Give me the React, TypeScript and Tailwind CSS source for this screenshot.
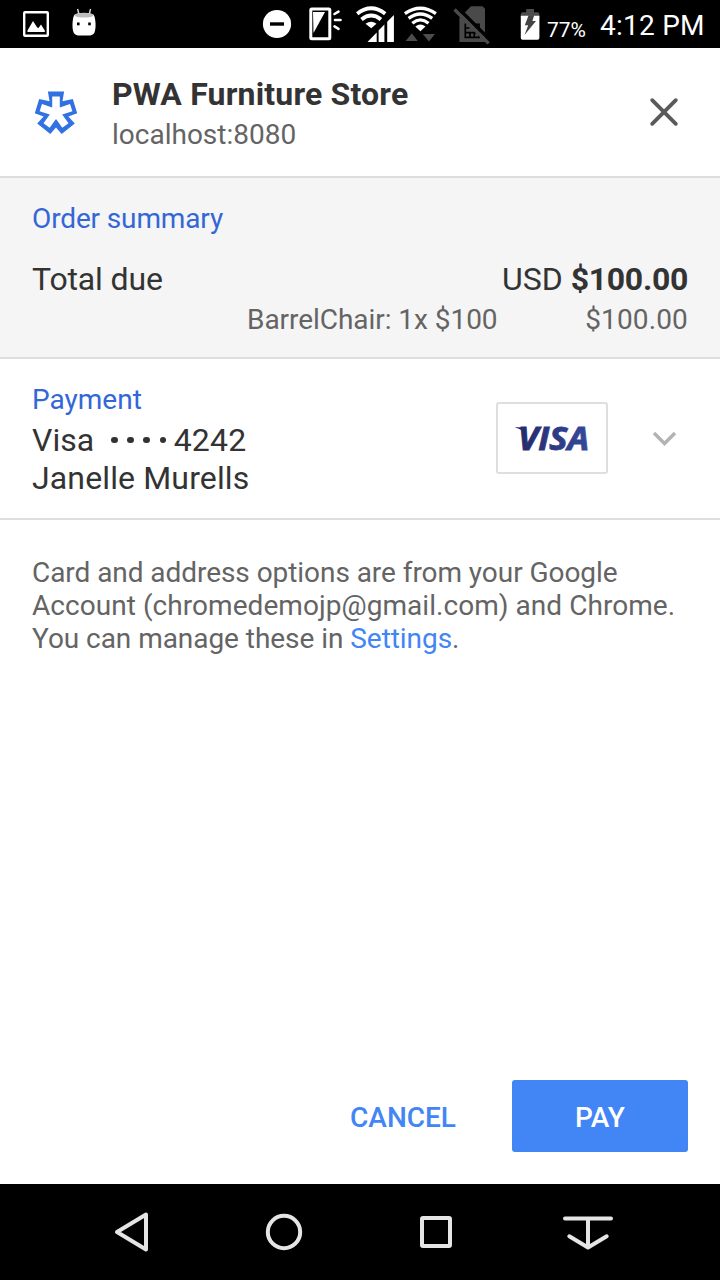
import React from "react";

const STAR =
  "M47.9 91.6H64.1L62.5 101.2L72.8 98.9L77.2 113.3L68.4 116.4L74.8 123.4L61.7 133.9L56 127.4L50.3 133.9L37.2 123.4L43.6 116.4L34.8 113.3L39.2 98.9L49.5 101.2Z" +
  "M52.2 96.6V107.4L42 104.1L39.6 111.3L49.8 114.6L43.5 123.3L49.7 127.8L56 119.1L62.3 127.8L68.5 123.3L62.2 114.6L72.4 111.3L70 104.1L59.8 107.4V96.6Z";

function StatusBar() {
  return (
    <header className="flex h-12 shrink-0 items-center bg-black text-white">
      <svg className="ml-5 h-12 w-20" viewBox="20 0 80 48">
        <rect x="24.2" y="12.2" width="23.6" height="23.6" rx="0.8" fill="none" stroke="#fff" strokeWidth="2.4" />
        <path d="M27.5 32V30.5L33 21L37.2 27.5L38.5 28L41 24.6L44.8 30.5V32Z" fill="#fff" />
        <path d="M79.2 15L77.6 9M89 15L90.6 9" stroke="#ddd" strokeWidth="1.4" />
        <path d="M74.3 15C76 12.3 92 12.3 93.8 15C95.6 18 96.4 28 94.5 32.5C93 35.8 89 35.6 84 35.6C79 35.6 75.2 35.8 73.6 32.5C71.8 28 72.4 18 74.3 15Z" fill="#fff" />
        <ellipse cx="84" cy="15.2" rx="9.3" ry="2.4" fill="#bdbdbd" />
        <rect x="77" y="22.5" width="2.6" height="2.8" fill="#000" />
        <rect x="88.2" y="22.5" width="2.6" height="2.8" fill="#000" />
      </svg>
      <svg className="ml-40 h-12 w-[284px]" viewBox="260 0 284 48">
        <circle cx="277" cy="24" r="14.1" fill="#fff" />
        <rect x="270" y="22.3" width="14" height="3.4" fill="#000" />
        <rect x="310.8" y="9" width="19" height="29.8" rx="1" fill="none" stroke="#fff" strokeWidth="3" />
        <path d="M313 12H325L313.5 33Z" fill="#fff" />
        <path d="M334.5 14L338.5 11.6M335 20H340.5M334.5 26.4L338.5 28.8" stroke="#fff" strokeWidth="2.6" strokeLinecap="round" />
        <g fill="none" stroke="#fff" strokeWidth="3.9">
          <path d="M357.2 13.7Q371.2 3 385.2 13.7" />
          <path d="M361.5 19.4Q371.2 11.6 380.9 19.4" />
          <path d="M404.9 13.7Q420.4 3 435.9 13.7" strokeWidth="3.4" />
          <path d="M408.6 18.4Q420.4 9.5 432.2 18.4" strokeWidth="3.3" />
          <path d="M412.3 23.2Q420.4 16.6 428.5 23.2" strokeWidth="3.3" />
        </g>
        <path d="M365.5 23.8Q371.2 19.8 376.5 23.8L371.2 28.2Z" fill="#fff" />
        <path d="M415.3 26.5Q420.4 22.7 425.5 26.5L420.4 31.3Z" fill="#fff" />
        <path d="M367.5 42L376.7 32.4V42ZM378.5 30.5L380 29V42H378.5ZM380 29L384.4 24.5V42H380ZM387.2 21.7L393.9 15V42H387.2Z" fill="#fff" />
        <path d="M377.6 31V42M385.8 23V42" stroke="#000" strokeWidth="1.2" />
        <path d="M405.7 41L411.8 33.3L417.7 41ZM422.8 34H435L428.9 41.5Z" fill="#4d4d4d" />
        <path d="M459.4 42V18L471 6.2H482.5L485 8.7V42Z" fill="#4a4a4a" />
        <path d="M469.5 28H465.3V37.3H479V24.3H474.5M465.3 23.5V28M465.3 32.7H479M470 32.7V37.3M474.3 32.7V37.3M474.5 28H479" fill="none" stroke="#000" strokeWidth="1.7" />
        <path d="M457.5 7.5L490 40" stroke="#000" strokeWidth="3.4" />
        <path d="M454.5 9.5L488.6 43.4" stroke="#4a4a4a" strokeWidth="3.4" />
        <path d="M526.2 9H534V12.3H537.5Q539.4 12.3 539.4 14.2V18H520.8V14.2Q520.8 12.3 522.7 12.3H526.2Z" fill="#4d4d4d" />
        <path d="M520.8 15.7H539.4V38Q539.4 39.8 537.6 39.8H522.6Q520.8 39.8 520.8 38Z" fill="#fff" />
        <path d="M528.6 15.2H534.2L532.4 21H536L524.5 35L528.2 25.2H524.8Z" fill="#444" />
      </svg>
      <span className="ml-[3px] mt-[11px] w-10 whitespace-nowrap text-[21px] leading-6">77%</span>
      <span className="ml-[13px] mt-1 whitespace-nowrap text-[28px] leading-8 tracking-[0.25px]">4:12 PM</span>
    </header>
  );
}

function MerchantHeader() {
  return (
    <section className="flex h-[130px] shrink-0 items-start border-b-2 border-[#dedede] px-8">
      <svg className="mt-10 h-12 w-12" viewBox="32 88 48 48">
        <path d={STAR} fill="#3171e0" fillRule="evenodd" />
      </svg>
      <div className="ml-8 flex-1 pt-[27px]">
        <h1 className="text-[32px] font-bold leading-[38px] tracking-[0.18px]">PWA Furniture Store</h1>
        <p className="mt-[5px] text-[28px] leading-[33px] text-[#646464]">localhost:8080</p>
      </div>
      <button aria-label="Close" className="mt-10 flex size-12 items-center justify-center">
        <svg className="size-12" viewBox="0 0 48 48" fill="none" stroke="#5a5a5a" strokeWidth="3.8" strokeLinecap="round">
          <path d="M12.2 12.2L35.8 35.8M35.8 12.2L12.2 35.8" />
        </svg>
      </button>
    </section>
  );
}

function OrderSummary() {
  return (
    <section className="h-[181px] shrink-0 border-b-2 border-[#dedede] bg-[#f5f5f5] px-8 pt-6">
      <h2 className="text-[28px] leading-[33px] tracking-[-0.13px] text-[#3367d6]">Order summary</h2>
      <div className="mt-[25px] flex justify-between text-[32px] leading-[38px]">
        <span className="tracking-[-0.15px]">Total due</span>
        <span>
          USD <b className="tracking-[-0.3px]">$100.00</b>
        </span>
      </div>
      <div className="mt-[5px] flex justify-end text-[28px] leading-[33px] text-[#646464]">
        <span className="tracking-[-0.05px]">BarrelChair: 1x $100</span>
        <span className="w-[190.5px] text-right tracking-[0.15px]">$100.00</span>
      </div>
    </section>
  );
}

function PaymentMethod() {
  return (
    <section className="flex h-[161px] shrink-0 items-start border-b-2 border-[#dedede] px-8">
      <div className="flex-1 pt-6">
        <h2 className="text-[28px] leading-[33px] text-[#3367d6]">Payment</h2>
        <div className="mt-[5px] flex items-center text-[32px] leading-[38px]">
          <span>Visa</span>
          <span className="ml-[17px] mr-[7.5px] flex gap-[9.6px]">
            {[0, 1, 2, 3].map((n) => (
              <i key={n} className="size-[6.6px] rounded-full bg-[#333]" />
            ))}
          </span>
          <span className="tracking-[0.15px]">4242</span>
        </div>
        <p className="text-[32px] leading-[38px] tracking-[0.14px]">Janelle Murells</p>
      </div>
      <div className="mt-[43px] flex h-[72px] w-28 items-center justify-center rounded-[3px] border-2 border-[#dedede] bg-white">
        <svg className="h-[68px] w-[108px]" viewBox="498 404 108 68">
          <defs>
            <linearGradient id="brand" x1="0" x2="1">
              <stop offset="0" stopColor="#252a6b" />
              <stop offset="1" stopColor="#354a9b" />
            </linearGradient>
          </defs>
          <text x="518" y="449.7" textLength="71" lengthAdjust="spacingAndGlyphs" fill="url(#brand)" stroke="url(#brand)" strokeWidth="0.9" fontFamily="Open Sans, sans-serif" fontSize="31.5" fontWeight="700" fontStyle="italic">
            VISA
          </text>
          <path d="M515.5 427.2H524L525 433.5Q521 429 515.5 427.8Z" fill="#292e72" />
        </svg>
      </div>
      <svg className="ml-8 mt-[55px] size-12" viewBox="0 0 48 48" fill="none" stroke="#b3b3b3" strokeWidth="3.4">
        <path d="M14 19L24.5 29.5L35 19" />
      </svg>
    </section>
  );
}

function NavigationBar() {
  return (
    <nav className="flex h-24 shrink-0 items-center justify-center bg-black">
      <svg className="h-24 w-[520px]" viewBox="100 1184 520 96" fill="none" stroke="#e5e5e5" strokeWidth="4" strokeLinejoin="round" strokeLinecap="round">
        <path d="M146 1214.5V1249.5L117 1232Z" />
        <circle cx="284" cy="1232" r="16.2" />
        <rect x="422" y="1218" width="28" height="28" rx="1" />
        <path d="M565 1218.5H611M588 1219V1247M569.3 1236.3L588 1247.5L606.7 1236.3" />
      </svg>
    </nav>
  );
}

export default function App() {
  return (
    <div className="flex h-[1280px] w-[720px] flex-col overflow-hidden bg-white font-['Roboto',sans-serif] text-[#333]">
      <StatusBar />
      <MerchantHeader />
      <OrderSummary />
      <PaymentMethod />
      <main className="flex-1 px-8 pt-9 text-[28px] leading-[33px] text-[#646464]">
        <p className="whitespace-nowrap">
          <span className="tracking-[-0.055px]">Card and address options are from your Google</span>
          <br />
          <span className="tracking-[0.05px]">Account (chromedemojp@gmail.com) and Chrome.</span>
          <br />
          <span className="tracking-[-0.05px]">
            You can manage these in <a className="text-[#4285f4]">Settings</a>.
          </span>
        </p>
      </main>
      <footer className="flex justify-end gap-8 px-8 pb-8 text-[28px] font-medium leading-[33px]">
        <button className="h-[72px] px-6 pt-0.5 text-[#4285f4]">CANCEL</button>
        <button className="h-[72px] w-44 rounded-[3px] bg-[#4285f4] pt-0.5 text-white">PAY</button>
      </footer>
      <NavigationBar />
    </div>
  );
}
